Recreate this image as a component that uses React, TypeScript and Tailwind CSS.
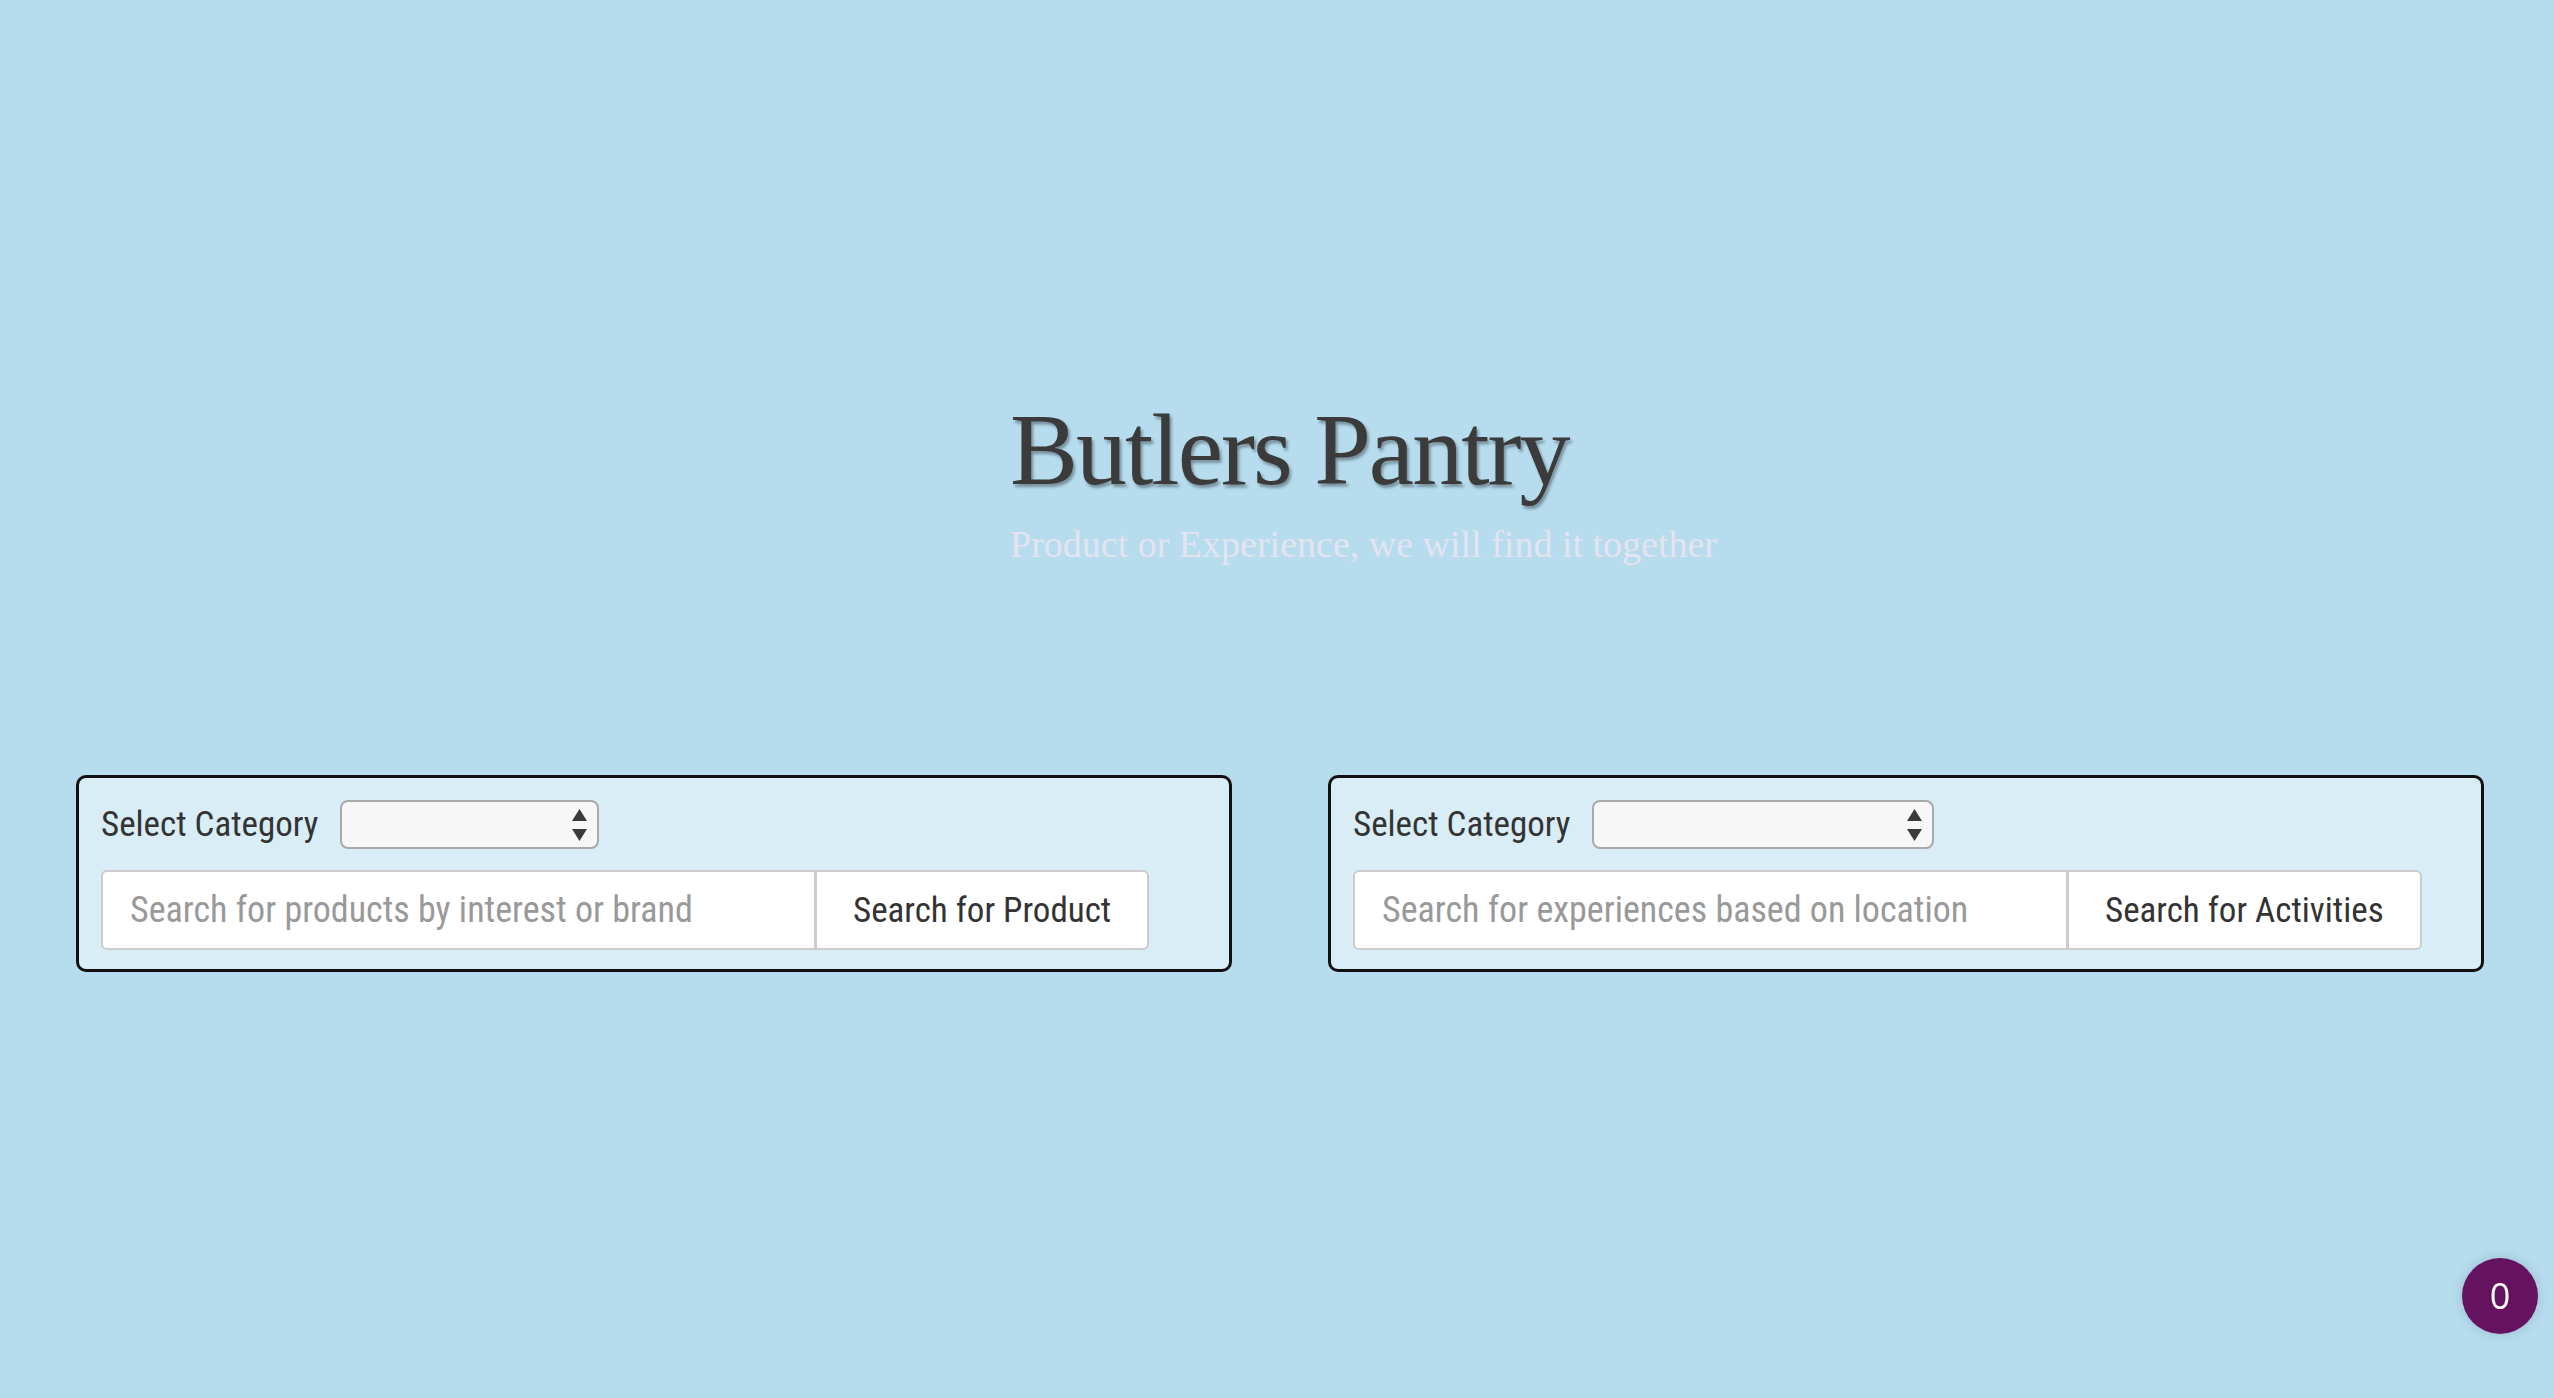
import React from 'react';

const narrow = "font-['Roboto_Condensed','Liberation_Sans_Narrow','DejaVu_Sans_Condensed','Liberation_Sans',sans-serif]";

function SelectArrows() {
  return (
    <svg width="15" height="32" viewBox="0 0 15 32" className="pointer-events-none absolute right-[12px] top-1/2 -translate-y-1/2">
      <path d="M7.5 0 L15 12 L0 12 Z" fill="#3a3a3a" />
      <path d="M0 20 L15 20 L7.5 32 Z" fill="#3a3a3a" />
    </svg>
  );
}

function SearchCard({ selectWidth, placeholder, button }: { selectWidth: string; placeholder: string; button: string }) {
  return (
    <div className={`w-[1156px] shrink-0 border-[3px] border-[#111] rounded-[10px] bg-[#d9edf7] pt-[22px] pb-[19px] px-[22px] ${narrow}`}>
      {/* category row */}
      <div className="flex items-center gap-[22px]">
        <label className="text-[35px] leading-none text-[#333]">Select Category</label>
        <div className={`relative ${selectWidth}`}>
          <select className="block w-full h-[49px] appearance-none rounded-[8px] border-2 border-[#a9a9a9] bg-[#f7f7f7] outline-none" />
          <SelectArrows />
        </div>
      </div>
      {/* search row */}
      <div className="mt-[21px] flex">
        <input
          type="text"
          placeholder={placeholder}
          className="w-[715px] h-[80px] rounded-l-[6px] border-2 border-[#cccccc] bg-white px-[27px] text-[36px] text-[#333] placeholder:text-[#999] outline-none"
        />
        <button className="h-[80px] rounded-r-[6px] border-2 border-l-[1px] border-[#cccccc] bg-white px-[36px] text-[35px] leading-none text-[#333]">
          {button}
        </button>
      </div>
    </div>
  );
}

export default function App() {
  return (
    <div className="min-h-screen w-full bg-[#b6dcee]">
      {/* Hero */}
      <header className="pt-[399px] pl-[1010px] font-['Liberation_Serif',serif]">
        <h1 className="text-[102px] leading-none tracking-[-2px] text-[#3b3b3b] [text-shadow:2px_3px_3px_rgba(0,0,0,0.35)]">
          Butlers Pantry
        </h1>
        <p className="mt-[24px] text-[38px] leading-none text-[#e3e4f0]">
          Product or Experience, we will find it together
        </p>
      </header>

      {/* Search panels */}
      <main className="mt-[212px] flex gap-[96px] pl-[76px]">
        <SearchCard selectWidth="w-[259px]" placeholder="Search for products by interest or brand" button="Search for Product" />
        <SearchCard selectWidth="w-[342px]" placeholder="Search for experiences based on location" button="Search for Activities" />
      </main>

      {/* Cart counter */}
      <div className="fixed right-[16px] bottom-[64px] flex h-[76px] w-[76px] items-center justify-center rounded-full bg-[#65135f] text-[36px] text-white font-['Open_Sans',sans-serif] shadow-[0_0_12px_rgba(0,0,0,0.15)]">
        0
      </div>
    </div>
  );
}
